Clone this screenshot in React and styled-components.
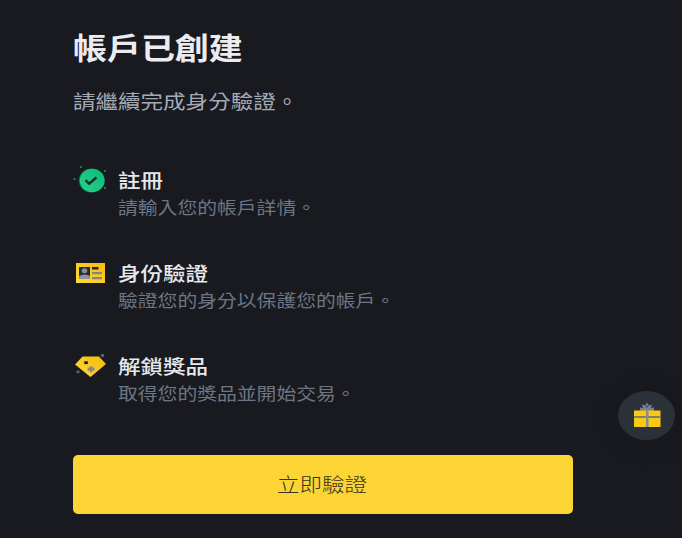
import React from "react";
import styled, { createGlobalStyle } from "styled-components";

const GlobalStyle = createGlobalStyle`
  body {
    margin: 0;
    background: #191a1f;
    font-family: "Noto Sans CJK TC", "Noto Sans", sans-serif;
  }
`;

const Page = styled.main`
  box-sizing: border-box;
  position: relative;
  width: 682px;
  height: 538px;
  padding: 26px 109px 0 73px;
  overflow: hidden;
  background: #191a1f;
`;

/* Glyphs are set slightly wide throughout the page. */
const WideText = styled.span`
  display: block;
  width: max-content;
  white-space: nowrap;
  transform: scaleX(1.155);
  transform-origin: ${(p) => p.$origin || "left"} center;
`;

const Title = styled.h1`
  margin: 0;
  height: 40px;
  font-size: 29.4px;
  line-height: 40px;
  font-weight: 700;
  color: #eaecef;
`;

const Subtitle = styled.p`
  margin: 21px 0 0;
  height: 28px;
  font-size: 19.5px;
  line-height: 28px;
  color: #a3abb6;
`;

const Steps = styled.ul`
  display: flex;
  flex-direction: column;
  gap: 41px;
  margin: 51px 0 0;
  padding: 0;
  list-style: none;
`;

const Step = styled.li`
  display: flex;
  height: 52px;
`;

const StepIcon = styled.svg`
  flex: none;
  width: 34px;
  height: 28px;
  margin-right: 11px;
`;

const StepBody = styled.div`
  display: flex;
  flex-direction: column;
`;

const StepTitle = styled.h2`
  margin: 0;
  height: 28px;
  font-size: 19.5px;
  line-height: 28px;
  font-weight: 500;
  color: #e6e8eb;
`;

const StepText = styled.p`
  margin: 0;
  height: 24px;
  font-size: 17.15px;
  line-height: 25px;
  color: #6c7684;
`;

const VerifyButton = styled.button`
  display: flex;
  align-items: center;
  justify-content: center;
  width: 500px;
  height: 59px;
  margin-top: 51px;
  padding: 0 1px 2px 0;
  border: 0;
  border-radius: 5px;
  background: #fcd535;
  color: #36321f;
  font-family: inherit;
  font-size: 19.5px;
  font-weight: 300;
`;

const GiftButton = styled.button`
  position: absolute;
  left: 618px;
  top: 391px;
  display: flex;
  align-items: center;
  justify-content: center;
  width: 57px;
  height: 49px;
  padding: 0 0 2px;
  border: 0;
  border-radius: 50%;
  background: #2b3139;
  box-shadow: 0 3px 24px rgba(12, 14, 18, 0.22);
`;

const GiftSvg = styled.svg`
  width: 28px;
  height: 26px;
`;

function CheckIcon() {
  return (
    <StepIcon viewBox="0 0 34 28">
      <defs>
        <linearGradient id="green" x1="1" y1="0" x2="0" y2="1">
          <stop offset="0" stopColor="#0bb978" />
          <stop offset="1" stopColor="#28d28c" />
        </linearGradient>
      </defs>
      <ellipse cx="17.8" cy="14.5" rx="12.2" ry="12" fill="#0c5f4a" />
      <ellipse cx="19.2" cy="14.5" rx="12.5" ry="11.8" fill="url(#green)" />
      <path d="M12.5 14.2l3.700 3.400 7.200-6.100" fill="none" stroke="#142d2a" strokeWidth="2.5" />
      <g fill="#0a805d">
        <path d="M7 0h2v2H7z" />
        <path d="M.5 12h2v2h-2z" />
        <path d="M31 4h2v2h-2z" />
        <path d="M31 21h2v2h-2z" />
      </g>
    </StepIcon>
  );
}

function IdCardIcon() {
  return (
    <StepIcon viewBox="0 0 34 28">
      <defs>
        <linearGradient id="card" x1="1" y1="0" x2="0" y2="1">
          <stop offset="0" stopColor="#f4bd10" />
          <stop offset="1" stopColor="#ffd93b" />
        </linearGradient>
      </defs>
      <path d="M3 4h29v20H3z" fill="url(#card)" />
      <path d="M6 8h11v12H6z" fill="#292d33" />
      <ellipse cx="11.5" cy="11.7" rx="2.8" ry="2.5" fill="#858d99" />
      <path d="M6 20v-3q2-1.500 5.500-1.500T17 17v3z" fill="#8d949f" />
      <path d="M19 8h6.500v2.500H19z" fill="#292820" />
      <path d="M19 13h10v2.200H19zM19 18h10v2.200H19z" fill="#858779" />
    </StepIcon>
  );
}

function DiamondIcon() {
  return (
    <StepIcon viewBox="0 0 34 28">
      <defs>
        <linearGradient id="gem" x1="1" y1="0" x2="0" y2="1">
          <stop offset="0" stopColor="#f2b90d" />
          <stop offset="1" stopColor="#ffdc3b" />
        </linearGradient>
      </defs>
      <path d="M9.500 4.500h16.500l7 7.500-15.500 13L2 12.500z" fill="url(#gem)" />
      <path d="M11.300 9.300h3.500v2.800h-3.500z" fill="#191a1f" />
      <path d="M17 14h2.200v1.500h2.300v3.300h-2.300v1.700H17v-1.700h-2.300v-3.300H17z" fill="#8b8875" />
      <ellipse cx="29.500" cy="3.500" rx="1.800" ry="1.700" fill="#59616c" />
      <ellipse cx="5" cy="19.800" rx="1.800" ry="1.600" fill="#59616c" />
    </StepIcon>
  );
}

function GiftIcon() {
  return (
    <GiftSvg viewBox="0 0 28 26">
      <path
        d="M7 9V5.500l3 .5-1-3.500 3 1L14 .5l2 3 3-1-1 3.500 3-.5V9z"
        fill="#77808e"
      />
      <path d="M12.300 2.500l1.700 3 1.700-3" fill="none" stroke="#474f5a" />
      <path d="M1 8.500h26.500v16.500H1z" fill="#fac914" />
      <path d="M1 14h26.500v2H1z" fill="#858064" />
      <path d="M13 8.500h2.500v16.500H13z" fill="#858c95" />
    </GiftSvg>
  );
}

const steps = [
  { Icon: CheckIcon, title: "註冊", text: "請輸入您的帳戶詳情。" },
  { Icon: IdCardIcon, title: "身份驗證", text: "驗證您的身分以保護您的帳戶。" },
  { Icon: DiamondIcon, title: "解鎖獎品", text: "取得您的獎品並開始交易。" },
];

export default function App() {
  return (
    <Page lang="zh-Hant">
      <GlobalStyle />
      <Title><WideText>帳戶已創建</WideText></Title>
      <Subtitle><WideText>請繼續完成身分驗證。</WideText></Subtitle>
      <Steps>
        {steps.map(({ Icon, title, text }) => (
          <Step key={title}>
            <Icon />
            <StepBody>
              <StepTitle><WideText>{title}</WideText></StepTitle>
              <StepText><WideText>{text}</WideText></StepText>
            </StepBody>
          </Step>
        ))}
      </Steps>
      <VerifyButton><WideText $origin="center">立即驗證</WideText></VerifyButton>
      <GiftButton aria-label="獎品"><GiftIcon /></GiftButton>
    </Page>
  );
}
